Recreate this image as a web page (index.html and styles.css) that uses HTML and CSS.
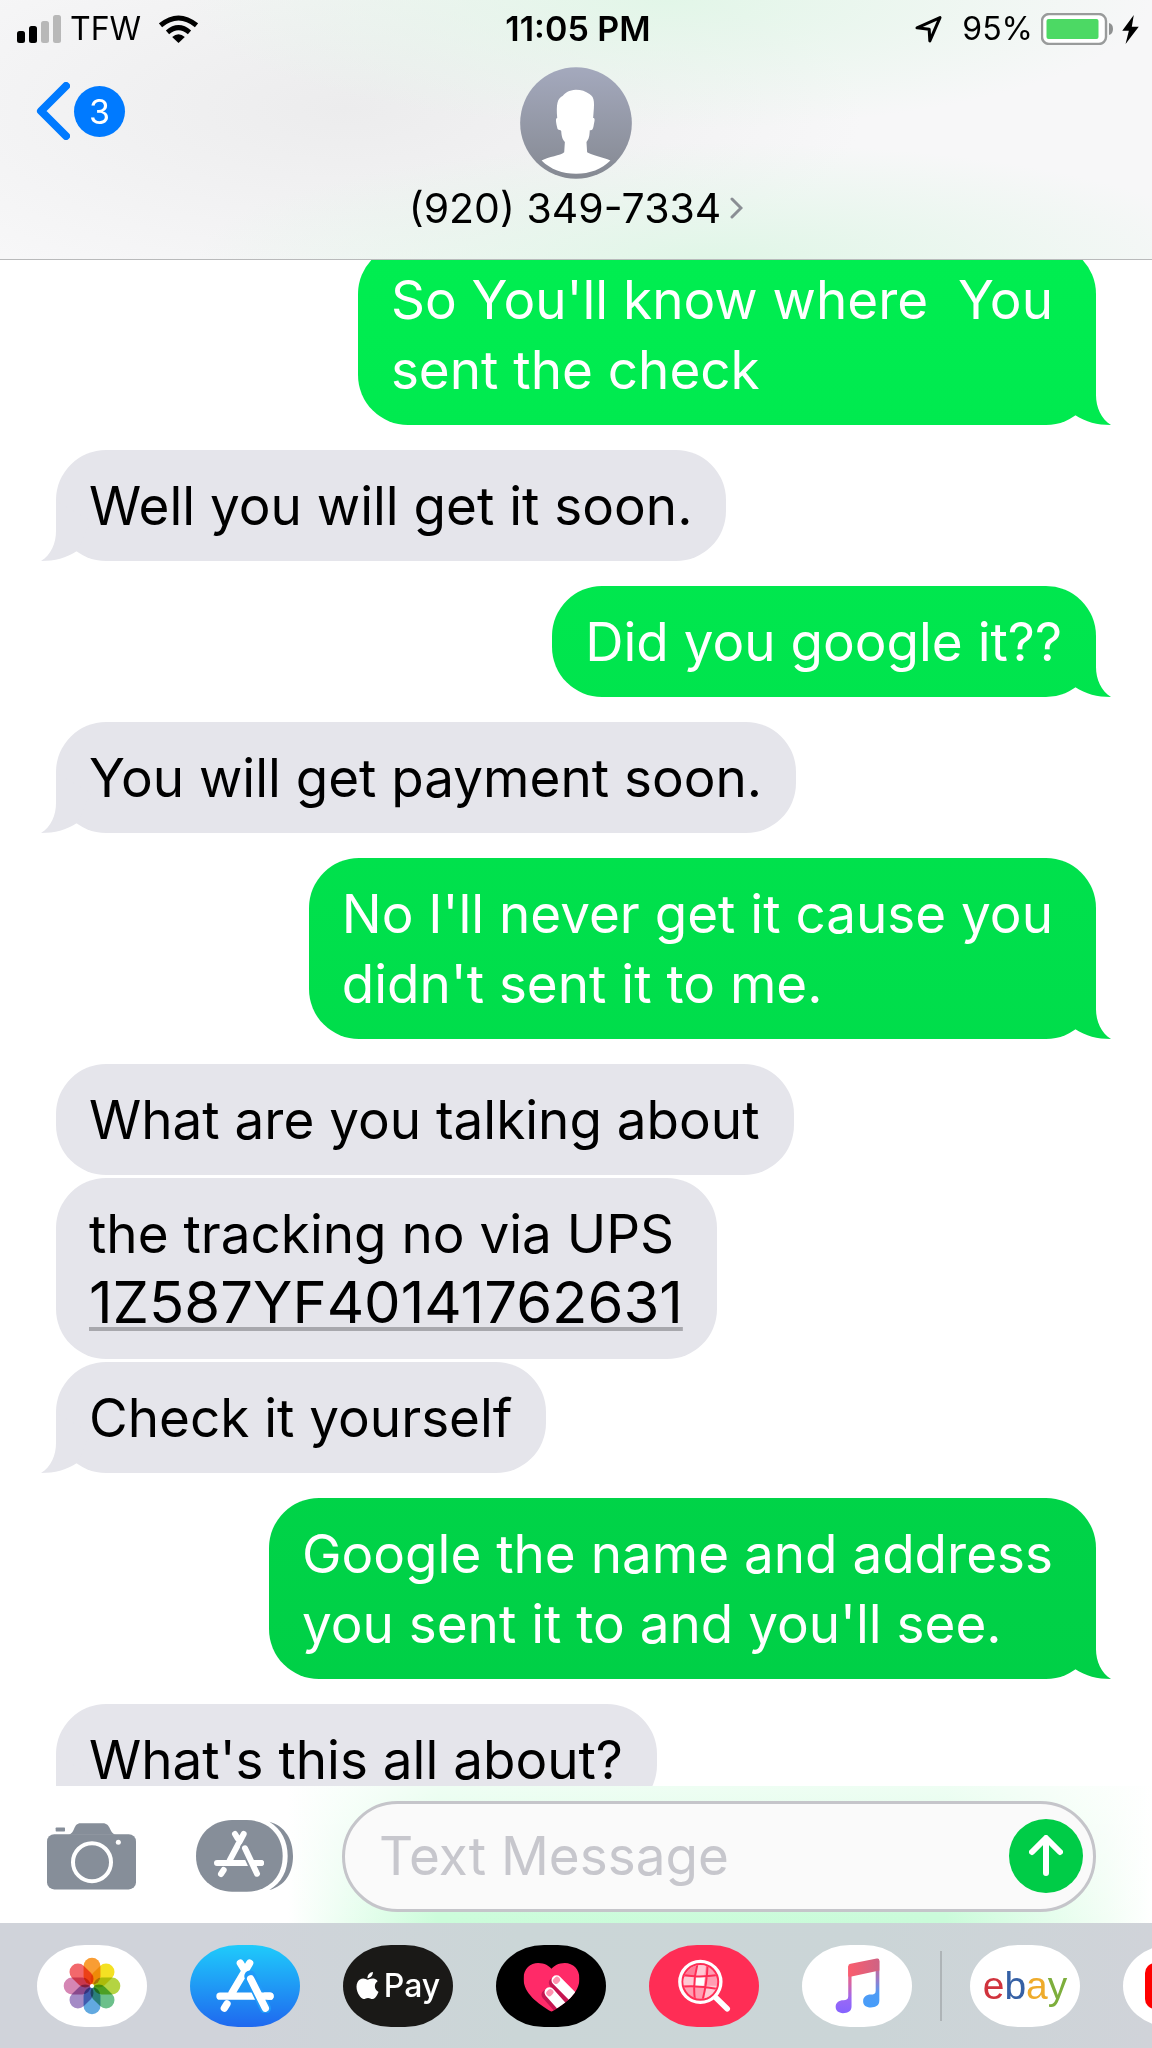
FILE: index.html
```html
<!DOCTYPE html>
<html lang="en">
<head>
<meta charset="utf-8">
<meta name="viewport" content="width=device-width, initial-scale=1">
<title>Messages</title>
<link rel="stylesheet" href="styles.css">
</head>
<body>
<div class="phone">
  <header class="top">
    <div class="status">
      <div class="status-side">
        <svg class="signal" viewBox="0 0 44 28" width="44" height="28" aria-hidden="true">
          <rect x="0" y="16" width="8" height="12" rx="2.5"/><rect x="12" y="11" width="8" height="17" rx="2.5"/>
          <rect x="24" y="6" width="8" height="22" rx="2.5" fill="#b8b8b8"/><rect x="36" y="0" width="8" height="28" rx="2.5" fill="#b8b8b8"/>
        </svg>
        <span class="carrier">TFW</span>
        <svg class="wifi" viewBox="0 0 116 84" width="39" height="28" aria-hidden="true">
          <g fill="none" stroke="#000" stroke-width="15"><path d="M4 31Q58-13 112 31"/><path d="M25 52Q58 24 91 52"/></g>
          <path d="M39 66Q58 50 77 66L58 84Z"/>
        </svg>
      </div>
      <time class="clock">11:05 PM</time>
      <div class="status-side status-right">
        <svg viewBox="0 0 80 80" width="27" height="27" aria-hidden="true"><path d="M6 35L74 5L44 74L42 39Z" fill="none" stroke="#000" stroke-width="9" stroke-linejoin="round"/></svg>
        <span class="percent">95%</span>
        <svg viewBox="0 0 73 32" width="73" height="32" aria-hidden="true">
          <rect x="1" y="1" width="64" height="30" rx="7" fill="#fff" stroke="#999b9b" stroke-width="2.4"/>
          <rect x="5.500" y="6" width="52" height="20" rx="2" fill="#4cd964"/><path d="M68 10q4 1 4 6t-4 6z" fill="#8f9191"/>
        </svg>
        <svg class="bolt" viewBox="0 0 50 88" width="17" height="29" aria-hidden="true"><path d="M35 0L0 48H20L10 88L50 36H29Z"/></svg>
      </div>
    </div>
    <div class="nav">
      <button class="back" type="button" aria-label="Back, 3 unread">
        <svg viewBox="0 0 34 58" width="34" height="58" aria-hidden="true"><path d="M30 4L5 29L30 54" fill="none" stroke="#007aff" stroke-width="8" stroke-linecap="round" stroke-linejoin="round"/></svg>
        <span class="badge">3</span>
      </button>
      <button class="contact" type="button">
        <svg viewBox="418 201 337 336" width="112" height="112" aria-hidden="true">
          <defs><linearGradient id="av" x1="0" y1="0" x2="0" y2="1"><stop offset="0" stop-color="#a4a9bd"/><stop offset="1" stop-color="#858992"/></linearGradient></defs>
          <circle cx="586.500" cy="369" r="168" fill="url(#av)"/>
          <path fill="#fff" d="M586 269C566 270 553 279 547 287C530 295 527 312 530 354C524 354 526 367 531 387C535 392 540 389 542 393C543 410 546 419 553 426L551 457C540 467 504 470 483 482C510 509 546 522 587 522S664 508 690 482C668 472 633 466 620 457L618 426C626 417 627 408 628 391C637 391 638 386 640 374C644 358 643 354 638 354C642 310 644 292 627 282C615 273 603 269 586 269Z"/>
        </svg>
        <span class="name">(920) 349-7334
          <svg viewBox="0 0 13 22" width="13" height="22" aria-hidden="true"><path d="M2 2L11 11L2 20" fill="none" stroke="#8a8e94" stroke-width="3" stroke-linecap="round"/></svg>
        </span>
      </button>
    </div>
  </header>

  <main class="thread">
    <ol class="messages">
      <li class="msg sent tail wrapped">So You'll know where&nbsp; You<br>sent the check</li>
      <li class="msg got tail">Well you will get it soon.</li>
      <li class="msg sent tail">Did you google it??</li>
      <li class="msg got tail">You will get payment soon.</li>
      <li class="msg sent tail wrapped">No I'll never get it cause you<br>didn't sent it to me.</li>
      <li class="msg got">What are you talking about</li>
      <li class="msg got joined">the tracking no via UPS<br><a href="#tracking">1Z587YF40141762631</a></li>
      <li class="msg got tail joined">Check it yourself</li>
      <li class="msg sent tail wrapped">Google the name and address<br>you sent it to and you'll see.</li>
      <li class="msg got tail">What's this all about?</li>
    </ol>
  </main>

  <form class="compose">
    <button class="icon-btn" type="button" aria-label="Camera">
      <svg viewBox="141 155 267 200" width="89" height="67" fill="#868e99" aria-hidden="true">
        <rect x="141" y="188" width="267" height="166" rx="22"/><path d="M205 190C228 184 218 155 242 155H308C334 155 326 184 348 190Z"/>
        <rect x="167" y="168" width="28" height="12" rx="2"/><circle cx="276" cy="272" r="57" fill="none" stroke="#fff" stroke-width="12"/><circle cx="355" cy="212" r="7.500" fill="#fff"/>
      </svg>
    </button>
    <button class="icon-btn apps" type="button" aria-label="Apps">
      <svg viewBox="588 147 291 216" width="97" height="72" aria-hidden="true">
        <path fill="#868e99" d="M588 255C588 188 640 147 696 147H740C800 147 848 188 848 255S800 362 740 362H696C640 362 588 322 588 255Z"/>
        <path fill="#868e99" d="M808 152C855 165 879 205 879 255S855 345 808 357C845 335 863 300 863 255S845 175 808 152Z"/>
        <g fill="none" stroke="#fff" stroke-width="18" stroke-linecap="round"><path d="M731 189L689 268M705 189L713 202M651 276H783M671 297L663 309"/><path d="M735 230L771 308" stroke="#868e99" stroke-width="30"/><path d="M735 232L771 308M762 276H783"/></g>
      </svg>
    </button>
    <div class="field">
      <input class="text" type="text" placeholder="Text Message" aria-label="Text Message">
      <button class="send" type="submit" aria-label="Send">
        <svg viewBox="0 0 34 42" width="34" height="42" aria-hidden="true"><path d="M17 38V4M3 17L17 3L31 17" fill="none" stroke="#fff" stroke-width="6" stroke-linecap="round" stroke-linejoin="round"/></svg>
      </button>
    </div>
  </form>

  <nav class="dock" aria-label="Message apps">
    <button class="pill" type="button" aria-label="Photos">
      <svg viewBox="190 559 172 172" width="58" height="58" aria-hidden="true">
        <g class="petals">
          <rect x="251" y="561" width="50" height="80" rx="25" fill="#f99d33"/>
          <rect x="251" y="561" width="50" height="80" rx="25" fill="#f4e123" transform="rotate(45 276 645)"/>
          <rect x="251" y="561" width="50" height="80" rx="25" fill="#b4d442" transform="rotate(90 276 645)"/>
          <rect x="251" y="561" width="50" height="80" rx="25" fill="#6cc08b" transform="rotate(135 276 645)"/>
          <rect x="251" y="561" width="50" height="80" rx="25" fill="#62a9e0" transform="rotate(180 276 645)"/>
          <rect x="251" y="561" width="50" height="80" rx="25" fill="#a48bc6" transform="rotate(225 276 645)"/>
          <rect x="251" y="561" width="50" height="80" rx="25" fill="#d586b4" transform="rotate(270 276 645)"/>
          <rect x="251" y="561" width="50" height="80" rx="25" fill="#f2686c" transform="rotate(315 276 645)"/>
        </g>
        <circle cx="276" cy="645" r="6" fill="#fff"/>
      </svg>
    </button>
    <button class="pill store" type="button" aria-label="App Store">
      <svg viewBox="646 558 180 164" width="60" height="55" aria-hidden="true">
        <g fill="none" stroke="#fff" stroke-width="22" stroke-linecap="round"><path d="M750 573L697 662M722 573L733 591M661 672H811M682 695L674 708"/><path d="M751 612L797 708" stroke="#209af9" stroke-width="34"/><path d="M753 620L797 708M788 672H811"/></g>
      </svg>
    </button>
    <button class="pill pay" type="button">
      <svg viewBox="2 0 20 24" width="23" height="27" fill="#fff" aria-hidden="true"><path d="M12.152 6.896c-.948 0-2.415-1.078-3.96-1.04-2.04.027-3.91 1.183-4.961 3.014-2.117 3.675-.546 9.103 1.519 12.09 1.013 1.454 2.208 3.09 3.792 3.039 1.52-.065 2.09-.987 3.935-.987 1.831 0 2.35.987 3.96.948 1.637-.026 2.676-1.48 3.676-2.948 1.156-1.688 1.636-3.325 1.662-3.415-.039-.013-3.182-1.221-3.22-4.857-.026-3.04 2.48-4.494 2.597-4.559-1.429-2.09-3.623-2.324-4.39-2.376-2-.156-3.675 1.09-4.61 1.09zM15.53 3.83c.843-1.012 1.4-2.427 1.245-3.83-1.207.052-2.662.805-3.532 1.818-.78.896-1.454 2.338-1.273 3.714 1.338.104 2.715-.688 3.559-1.701"/></svg>
      <span>Pay</span>
    </button>
    <button class="pill touch" type="button" aria-label="Digital Touch">
      <svg viewBox="428 572 170 156" width="57" height="52" aria-hidden="true">
        <defs><clipPath id="heart"><path d="M513 727C470 702 429 670 429 628C429 598 450 581 473 581C492 581 506 590 513 598C520 590 534 581 553 581C578 581 597 600 597 628C597 670 556 702 513 727Z"/></clipPath></defs>
        <g clip-path="url(#heart)"><rect x="428" y="572" width="170" height="160" fill="#ff2a68"/>
          <g fill="none" stroke-linecap="round" stroke-width="30"><path d="M520 640L570 697M498 676L530 712" stroke="#c51651"/><path d="M528 633L580 685M507 669L545 712" stroke="#fff"/></g>
          <g fill="#ff93b0"><rect x="517" y="624" width="22" height="18" rx="8" transform="rotate(-45 528 633)"/><rect x="497" y="661" width="22" height="18" rx="8" transform="rotate(-45 508 670)"/></g></g>
      </svg>
    </button>
    <button class="pill images" type="button" aria-label="Image search">
      <svg viewBox="888 564 162 160" width="54" height="53" aria-hidden="true">
        <defs><clipPath id="globe"><circle cx="958" cy="633" r="51"/></clipPath></defs>
        <g clip-path="url(#globe)"><rect x="900" y="575" width="116" height="116" fill="#ff9db2"/><path d="M946 575H976L970 615H944ZM900 618H944V645H900ZM970 645H1016V691H970Z" fill="#ffc9d4"/><path d="M944 617H972L968 646H942Z" fill="#fff"/><path d="M900 575H944V614H900Z" fill="#ff7d98"/>
          <g fill="none" stroke="#ff2d55" stroke-width="6"><path d="M950 577Q934 633 942 690M980 577Q978 640 964 690M904 612Q955 621 1012 612M904 647Q956 643 1012 655"/></g></g>
        <circle cx="958" cy="633" r="62" fill="none" stroke="#fff" stroke-width="10"/><path d="M1005 681L1039 714" stroke="#fff" stroke-width="17" stroke-linecap="round"/>
      </svg>
    </button>
    <button class="pill" type="button" aria-label="Music">
      <svg viewBox="238 560 136 168" width="45" height="56" aria-hidden="true">
        <defs><linearGradient id="m1" x1="0" y1="0" x2="0" y2="1"><stop offset="0" stop-color="#fc5b6b"/><stop offset=".35" stop-color="#d9659f"/><stop offset=".7" stop-color="#9a68f5"/><stop offset="1" stop-color="#8463ff"/></linearGradient>
        <linearGradient id="m2" x1="0" y1="0" x2="0" y2="1"><stop offset="0" stop-color="#dc5f80"/><stop offset=".4" stop-color="#9a7ac8"/><stop offset=".7" stop-color="#4e9bf5"/><stop offset="1" stop-color="#469dfa"/></linearGradient>
        <linearGradient id="m3"><stop offset="0" stop-color="#fb5c6d"/><stop offset="1" stop-color="#ce6384"/></linearGradient></defs>
        <path fill="url(#m1)" d="M278 584H288V706C288 720 277 726 262 726C249 726 240 719 240 707C240 694 250 687 263 687C273 687 278 684 278 675Z"/>
        <path fill="url(#m2)" d="M361 568H372V688C372 703 361 709 346 709C332 709 323 702 323 690C323 677 333 670 346 670C356 670 361 667 361 658Z"/>
        <path fill="url(#m3)" d="M278 585Q278 578 285 577L364 561Q372 559 372 567V597L288 615H278Z"/>
      </svg>
    </button>
    <span class="divider"></span>
    <button class="pill ebay" type="button"><span class="e">e</span><span class="b">b</span><span class="a">a</span><span class="y">y</span></button>
    <button class="pill" type="button" aria-label="YouTube">
      <svg viewBox="0 0 66 46" width="66" height="46" aria-hidden="true"><rect width="66" height="46" rx="10" fill="#f00"/><path d="M26 13V33L44 23Z" fill="#fff"/></svg>
    </button>
  </nav>
</div>
</body>
</html>
```
FILE: styles.css
```css
* { box-sizing: border-box; }

body {
  margin: 0;
  font-family: Inter, "Liberation Sans", sans-serif;
  color: #000;
  background: #fff;
}

button {
  margin: 0;
  padding: 0;
  border: 0;
  background: none;
  color: inherit;
  font: inherit;
  cursor: pointer;
}

svg { display: block; flex: none; }

.phone {
  display: flex;
  flex-direction: column;
  height: 100vh;
  overflow: hidden;
}

/* Status bar and contact header */
.top {
  flex: none;
  height: 260px;
  border-bottom: 1px solid #b9babb;
  background:
    radial-gradient(ellipse 42% 50% at 58% 0%, #e2f6e8, #e2f6e800),
    radial-gradient(ellipse 45% 45% at 62% 100%, #e0f6e7, #e0f6e700),
    radial-gradient(ellipse 45% 75% at 30% 42%, #ececed, #ececed00),
    #f7f7f8;
}

.status {
  display: grid;
  grid-template-columns: 1fr auto 1fr;
  align-items: center;
  height: 58px;
  padding: 0 13px 0 17px;
  font-size: 32px;
  line-height: 40px;
}

.status-side { display: flex; align-items: center; }
.status-right { justify-content: flex-end; }
.carrier { margin: 0 18px 0 9px; }
.percent { margin: 0 8px 0 20px; }
.bolt { margin-left: 8px; }
.clock { font-size: 34px; font-weight: 600; }

.nav {
  display: grid;
  grid-template-columns: 1fr auto 1fr;
  align-items: start;
  padding: 9px 36px 0;
}

.back {
  display: flex;
  align-items: center;
  gap: 4px;
  margin-top: 15px;
  justify-self: start;
}

.badge {
  width: 51px;
  height: 51px;
  border-radius: 50%;
  background: #007aff;
  color: #fff;
  font-size: 34px;
  line-height: 51px;
  text-align: center;
}

.contact {
  display: flex;
  flex-direction: column;
  align-items: center;
  gap: 4px;
}

.name {
  display: flex;
  align-items: center;
  gap: 9px;
  font-size: 41px;
  line-height: 50px;
}

/* Conversation */
.thread {
  flex: 1;
  min-height: 0;
  overflow: hidden;
}

.messages {
  display: flex;
  flex-direction: column;
  gap: 25px;
  margin: -16px 0 0;
  padding: 0 56px;
  list-style: none;
}

.msg {
  position: relative;
  padding: 21px 34px 20px 33px;
  border-radius: 50px;
  font-size: 53px;
  line-height: 70px;
}

.got {
  align-self: flex-start;
  background: #e5e5eb;
}

.sent {
  align-self: flex-end;
  color: #fff;
}

.sent,
.sent::after {
  background: linear-gradient(#00f352, #00c844) fixed;
}

.wrapped { padding-right: 43px; }

.joined { margin-top: -22px; }

.tail::after {
  content: "";
  position: absolute;
  bottom: 0;
  width: 50px;
  height: 60px;
}

.got.tail::after {
  left: -15px;
  background: #e5e5eb;
  clip-path: path("M15 0V30C15 42 10 54 0 60C14 60 25 57 36 50L50 20Z");
}

.sent.tail::after {
  right: -15px;
  clip-path: path("M35 0V30C35 42 40 54 50 60C36 60 25 57 14 50L0 20Z");
}

.msg a {
  color: inherit;
  font-size: 58px;
  line-height: 60px;
  text-decoration: underline;
  text-decoration-color: #a8a8ad;
  text-decoration-thickness: 4px;
  text-decoration-skip-ink: none;
  text-underline-offset: 4px;
}

/* Compose bar */
.compose {
  display: flex;
  flex: none;
  align-items: center;
  height: 137px;
  padding: 3px 56px 0 47px;
  background:
    linear-gradient(#ffffffb0, #ffffff00),
    linear-gradient(90deg, #fff 25%, #cbfcda 38%, #c9fbd9 82%, #f2fef5 96%, #fff);
}

.apps { margin: 0 49px 0 60px; }

.field {
  display: flex;
  flex: 1;
  align-items: center;
  min-width: 0;
  height: 111px;
  padding: 0 10px 0 34px;
  border: 3px solid #c5c5ca;
  border-radius: 56px;
  background: #fafafa;
}

.text {
  flex: 1;
  min-width: 0;
  padding: 0;
  border: 0;
  outline: 0;
  background: none;
  font: inherit;
  font-size: 53px;
  line-height: 70px;
}

.text::placeholder { color: #c7c7cd; opacity: 1; }

.send {
  display: grid;
  place-items: center;
  width: 74px;
  height: 74px;
  border-radius: 50%;
  background: #00cc47;
}

/* App drawer */
.dock {
  display: flex;
  flex: none;
  align-items: center;
  gap: 43px;
  height: 125px;
  padding-left: 37px;
  overflow: hidden;
  background: linear-gradient(90deg, #d0d3da 20%, #cbd6d7 45%, #cbd5d7 75%, #d0d3d9);
}

.pill {
  display: flex;
  flex: none;
  align-items: center;
  justify-content: center;
  width: 110px;
  height: 82px;
  border-radius: 48px / 41px;
  background: #fff;
}

.petals rect { mix-blend-mode: multiply; }
.store { background: linear-gradient(#1fcbfb, #1f68ef); }
.pay { gap: 5px; background: #1a1917; color: #fff; font-size: 32px; font-weight: 500; }
.touch { background: #000; }
.images { background: #ff2d55; }

.divider {
  flex: none;
  width: 2px;
  height: 70px;
  margin: 0 -15px;
  background: #aeb4b7;
}

.ebay { font-family: "Liberation Sans", sans-serif; font-size: 39px; line-height: 44px; }
.e { color: #d0333d; }
.b { color: #3560a5; }
.a { color: #eeab2b; }
.y { color: #7dae3c; }
```
